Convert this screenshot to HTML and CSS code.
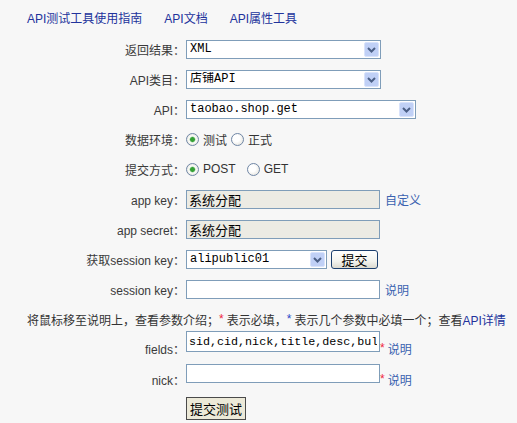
FILE: index.html
```html
<!DOCTYPE html>
<html lang="zh-CN">
<head>
<meta charset="utf-8">
<title>API测试工具</title>
<link rel="stylesheet" href="styles.css">
</head>
<body>
<svg class="defs" width="0" height="0" aria-hidden="true">
  <symbol id="dd" viewBox="0 0 15 15">
    <rect x="0.5" y="0.5" width="14" height="14" rx="1.5" fill="#c0d0f6" stroke="#d9e3fb"/>
    <path d="M4 6l3.5 3.5L11 6" fill="none" stroke="#4b5f86" stroke-width="2"/>
  </symbol>
</svg>
<div class="page">
  <nav class="links">
    <a href="#">API测试工具使用指南</a>
    <a href="#">API文档</a>
    <a href="#">API属性工具</a>
  </nav>
  <form class="form">
    <div class="row">
      <label class="lbl">返回结果：</label>
      <div class="ctl">
        <span class="combo w195"><select><option>XML</option><option>JSON</option></select><svg class="drop"><use href="#dd"/></svg></span>
      </div>
    </div>
    <div class="row">
      <label class="lbl">API类目：</label>
      <div class="ctl">
        <span class="combo w195"><select><option>店铺API</option></select><svg class="drop"><use href="#dd"/></svg></span>
      </div>
    </div>
    <div class="row">
      <label class="lbl">API：</label>
      <div class="ctl">
        <span class="combo w230"><select><option>taobao.shop.get</option></select><svg class="drop"><use href="#dd"/></svg></span>
      </div>
    </div>
    <div class="row">
      <label class="lbl">数据环境：</label>
      <div class="ctl">
        <label class="opt"><input class="radio" type="radio" name="env" checked>测试</label>
        <label class="opt"><input class="radio" type="radio" name="env">正式</label>
      </div>
    </div>
    <div class="row">
      <label class="lbl">提交方式：</label>
      <div class="ctl">
        <label class="opt wide"><input class="radio" type="radio" name="method" checked>POST</label>
        <label class="opt"><input class="radio" type="radio" name="method">GET</label>
      </div>
    </div>
    <div class="row">
      <label class="lbl">app key：</label>
      <div class="ctl">
        <input class="txt ro" type="text" value="系统分配" readonly>
        <a class="note" href="#">自定义</a>
      </div>
    </div>
    <div class="row">
      <label class="lbl">app secret：</label>
      <div class="ctl">
        <input class="txt ro" type="text" value="系统分配" readonly>
      </div>
    </div>
    <div class="row">
      <label class="lbl">获取session key：</label>
      <div class="ctl">
        <span class="combo w142"><select><option>alipublic01</option></select><svg class="drop"><use href="#dd"/></svg></span>
        <button class="xpbtn" type="button">提交</button>
      </div>
    </div>
    <div class="row">
      <label class="lbl">session key：</label>
      <div class="ctl">
        <input class="txt" type="text">
        <a class="note" href="#">说明</a>
      </div>
    </div>
    <p class="hint">将鼠标移至说明上，查看参数介绍；<span class="red">*</span> 表示必填，<span class="blue">*</span> 表示几个参数中必填一个；查看<a href="#">API详情</a></p>
    <div class="row low fields">
      <label class="lbl">fields：</label>
      <div class="ctl">
        <input class="txt code" type="text" value="sid,cid,nick,title,desc,bulletin,pic_path,created,modified">
        <span class="req">*</span><a class="note" href="#">说明</a>
      </div>
    </div>
    <div class="row low nick">
      <label class="lbl">nick：</label>
      <div class="ctl">
        <input class="txt" type="text">
        <span class="req">*</span><a class="note" href="#">说明</a>
      </div>
    </div>
    <div class="row submit">
      <span class="lbl"></span>
      <div class="ctl">
        <button class="btn" type="submit">提交测试</button>
      </div>
    </div>
  </form>
</div>
</body>
</html>
```
FILE: styles.css
```css
html, body {
  margin: 0;
  padding: 0;
  background: #f7f7f7;
}
body {
  font-family: "Liberation Sans", "Noto Sans CJK SC", sans-serif;
  font-size: 12px;
  color: #333;
}
.defs {
  position: absolute;
  width: 0;
  height: 0;
  overflow: hidden;
}
.page {
  padding-left: 27px;
}
.links {
  height: 34px;
  display: flex;
  align-items: center;
  gap: 22px;
  padding-top: 1px;
  box-sizing: border-box;
}
.links a {
  color: #22339c;
  text-decoration: none;
}
.form {
  margin: 0;
  display: flex;
  flex-direction: column;
}
.row {
  display: grid;
  grid-template-columns: 159px 1fr;
  height: 30px;
  align-items: center;
}
.lbl {
  text-align: right;
  white-space: nowrap;
  color: #3a3a3a;
  padding-right: 1px;
}
.ctl {
  display: flex;
  align-items: center;
  white-space: nowrap;
}
.combo {
  position: relative;
  display: inline-block;
  height: 19px;
}
.w195 { width: 195px; }
.w230 { width: 230px; }
.w142 { width: 141px; }
.combo select {
  appearance: none;
  -webkit-appearance: none;
  width: 100%;
  height: 19px;
  margin: 0;
  padding: 0 18px 0 3px;
  border: 1px solid #7f9db9;
  border-radius: 0;
  background: #fff;
  font-family: "Liberation Mono", "Noto Sans CJK SC", monospace;
  font-size: 12px;
  color: #000;
  box-sizing: border-box;
  outline: none;
}
.drop {
  position: absolute;
  right: 2px;
  top: 2px;
  width: 15px;
  height: 15px;
  pointer-events: none;
}
.opt {
  display: inline-flex;
  align-items: center;
  gap: 4px;
  margin-right: 4px;
  color: #333;
}
.opt.wide {
  margin-right: 11px;
}
.radio {
  appearance: none;
  -webkit-appearance: none;
  width: 13px;
  height: 13px;
  margin: 0;
  border: 1px solid #6f86a6;
  border-radius: 50%;
  background: radial-gradient(circle at 40% 40%, #ffffff 0, #ffffff 35%, #dedcd3 100%);
  box-sizing: border-box;
}
.radio:checked {
  background: radial-gradient(circle, #35a035 0, #35a035 2px, #9bd29b 2.6px, #ffffff 3.4px, #f4f4f0 55%, #dedcd3 100%);
}
.txt {
  width: 194px;
  height: 19px;
  margin: 0;
  padding: 0 2px;
  border: 1px solid #7f9db9;
  background: #fff;
  font-family: "Liberation Mono", "Noto Sans CJK SC", monospace;
  font-size: 13px;
  color: #000;
  box-sizing: border-box;
  outline: none;
}
.txt.ro {
  background: #ecebe4;
  font-family: "Noto Sans CJK SC", sans-serif;
}
.txt.code {
  height: 21px;
  font-size: 11.7px;
  padding: 0 2px;
}
.note {
  color: #3a62b0;
  text-decoration: none;
  margin-left: 5px;
}
.xpbtn {
  margin: 0 0 0 4px;
  width: 47px;
  height: 19px;
  padding: 0;
  border: 1px solid #1c3f6e;
  border-radius: 3px;
  background: linear-gradient(#ffffff, #f3f3ee 60%, #dcdad0);
  font-family: "Noto Sans CJK SC", sans-serif;
  font-size: 13px;
  line-height: 17px;
  color: #000;
}
.hint {
  margin: 0;
  height: 27px;
  padding-top: 3px;
  box-sizing: border-box;
  display: flex;
  align-items: center;
  white-space: nowrap;
  color: #333;
}
.hint .red {
  color: #f0263c;
  margin-right: 3px;
}
.hint .blue {
  color: #2c48c8;
  margin-right: 3px;
}
.hint a {
  color: #22339c;
  text-decoration: none;
}
.row.low {
  align-items: end;
}
.row.low .ctl {
  align-items: flex-end;
}
.row.low .lbl,
.row.low .note {
  line-height: 14px;
  margin-bottom: -5px;
}
.row.low .note {
  margin-left: 3px;
}
.row.fields {
  height: 21px;
}
.row.nick {
  height: 19px;
  margin-top: 12px;
}
.req {
  color: #f0263c;
  font-size: 12px;
  line-height: 12px;
  margin-bottom: -2px;
}
.row.submit {
  height: 23px;
  margin-top: 14px;
}
.btn {
  margin: 0;
  width: 60px;
  height: 23px;
  padding: 0;
  border: 1px solid #4a4a4a;
  border-radius: 0;
  background: #ece9d8;
  font-family: "Noto Sans CJK SC", sans-serif;
  font-size: 13px;
  color: #000;
}
```
